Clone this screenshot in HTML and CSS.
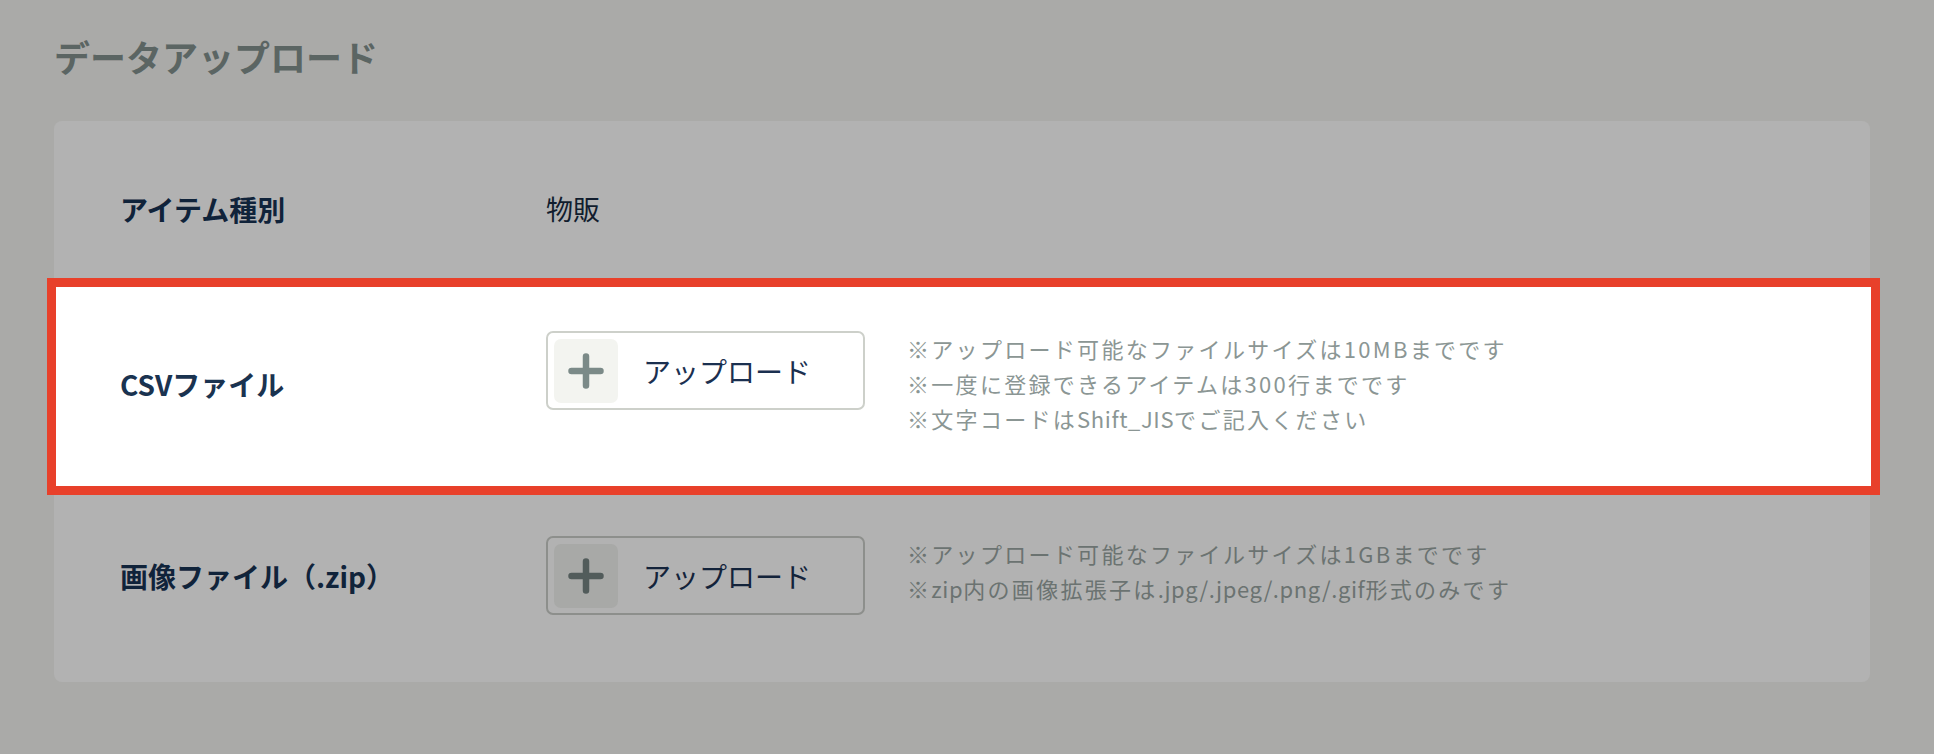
FILE: index.html
```html
<!DOCTYPE html>
<html lang="ja">
<head>
<meta charset="utf-8">
<title>データアップロード</title>
<link rel="stylesheet" href="styles.css">
</head>
<body>
<main class="page">
  <h1 class="title">データアップロード</h1>
  <section class="card">
    <div class="row row-dim row-type">
      <div class="label">アイテム種別</div>
      <div class="value">物販</div>
    </div>
    <div class="row row-focus">
      <div class="label">CSVファイル</div>
      <div class="value">
        <button class="upload" type="button">
          <span class="upload-icon">
            <svg viewBox="0 0 36 36" width="36" height="36" aria-hidden="true"><path d="M18 3.5V32.5M3.5 18H32.5" fill="none" stroke-width="6.5" stroke-linecap="round"/></svg>
          </span>
          <span class="upload-text">アップロード</span>
        </button>
        <ul class="notes">
          <li>※アップロード可能なファイルサイズは10MBまでです</li>
          <li>※一度に登録できるアイテムは300行までです</li>
          <li>※文字コードは<span class="en">Shift_JIS</span>でご記入ください</li>
        </ul>
      </div>
    </div>
    <div class="row row-dim">
      <div class="label">画像ファイル（.zip）</div>
      <div class="value">
        <button class="upload" type="button">
          <span class="upload-icon">
            <svg viewBox="0 0 36 36" width="36" height="36" aria-hidden="true"><path d="M18 3.5V32.5M3.5 18H32.5" fill="none" stroke-width="6.5" stroke-linecap="round"/></svg>
          </span>
          <span class="upload-text">アップロード</span>
        </button>
        <ul class="notes">
          <li>※アップロード可能なファイルサイズは1GBまでです</li>
          <li>※<span class="en">zip</span>内の画像拡張子は<span class="en">.jpg/.jpeg/.png/.gif</span>形式のみです</li>
        </ul>
      </div>
    </div>
  </section>
</main>
</body>
</html>
```

FILE: styles.css
```css
html, body {
  margin: 0;
  padding: 0;
}

body {
  background: #aaaaa8;
  font-family: "Noto Sans CJK JP", "Noto Sans", sans-serif;
  width: 1934px;
  height: 754px;
  overflow: hidden;
}

.page {
  padding: 32px 64px 0 54px;
}

.title {
  margin: 0 0 40px;
  font-size: 36px;
  line-height: 49px;
  font-weight: 700;
  color: #5b6563;
}

.card {
  background: #b2b2b2;
  border-radius: 8px;
  padding: 16px 0 17px;
}

.row {
  display: flex;
  align-items: center;
  padding: 50px 0 50px 66px;
  position: relative;
  z-index: 0;
}

.label {
  width: 426px;
  flex: none;
  font-size: 28px;
  font-weight: 700;
  line-height: 44px;
  color: #10233a;
}

.value {
  display: flex;
  align-items: flex-start;
  gap: 42px;
  font-size: 27px;
  line-height: 44px;
  color: #111d2e;
}

.upload {
  box-sizing: border-box;
  width: 319px;
  height: 79px;
  display: flex;
  align-items: center;
  padding: 0 6px;
  border: 2px solid #8d8f8c;
  border-radius: 7px;
  background: transparent;
  font-family: inherit;
  cursor: pointer;
}

.upload-icon {
  width: 64px;
  height: 64px;
  border-radius: 7px;
  background: #a8a9a7;
  display: flex;
  align-items: center;
  justify-content: center;
  stroke: #525c5b;
}

.upload-text {
  margin-left: 25px;
  font-size: 28px;
  color: #13233a;
}

.notes {
  list-style: none;
  margin: 0;
  padding: 0;
  font-size: 22px;
  line-height: 35px;
  letter-spacing: 2.3px;
  color: #6b7371;
}

.notes .en {
  letter-spacing: 0.6px;
}

/* highlighted row */
.row-focus::before {
  content: "";
  position: absolute;
  top: -3px;
  bottom: -9px;
  left: -7px;
  right: -10px;
  background: #ffffff;
  border: 9px solid #e8402a;
  z-index: -1;
}

.row-focus .label {
  color: #1a3350;
}

.row-focus .upload {
  border-color: #cdd0ca;
}

.row-focus .upload-icon {
  background: #f3f4f0;
  stroke: #7b8a88;
}

.row-focus .upload-text {
  color: #1b3050;
}

.row-focus .notes {
  color: #8b9694;
}
```
